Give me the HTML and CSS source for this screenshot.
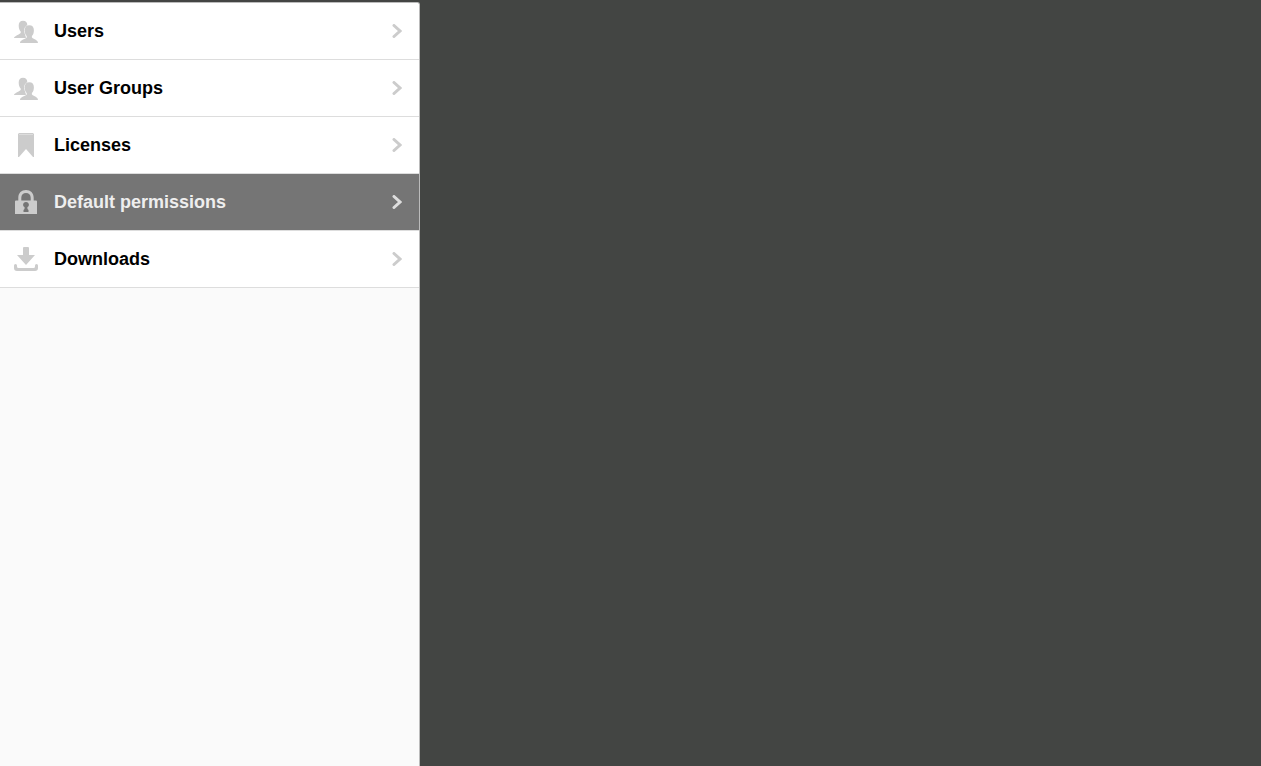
FILE: index.html
```html
<!DOCTYPE html>
<html lang="en">
<head>
    <meta charset="UTF-8">
    <meta name="viewport" content="width=device-width, initial-scale=1.0">
    <title>Administration</title>
    <link rel="stylesheet" href="styles.css">
</head>
<body>

<!-- Shared icons -->
<svg class="sprite" aria-hidden="true">
    <symbol id="icon-users" viewBox="0 0 24 24">
        <path d="M9 1.700c2.900 0 4.300 1.700 4.300 4.500 0 3-.7 5-2 6.300v3L12 19H0c0-1.600 3-2.300 6.700-5v-1.500C5.400 11.200 4.700 9.200 4.700 6.500c0-3 1.500-4.800 4.300-4.800z"/>
        <path class="front" d="M15.300 6.300c3 0 4.600 1.900 4.600 5 0 2.700-.7 4.500-2 5.800v1.500C20 20.500 24 21 24 24H6c0-3 4.700-3.500 6.700-5.400v-1.500c-1.300-1.300-2-3.100-2-5.800 0-3.100 1.600-5 4.600-5z"/>
    </symbol>
    <symbol id="icon-bookmark" viewBox="0 0 24 24">
        <path d="M5 0h14l1 1v23h-1l-7-8-7 8H4V1z"/>
        <path class="shine" d="M5 1h14v1H5z"/>
    </symbol>
    <symbol id="icon-lock" viewBox="0 0 24 24">
        <path fill-rule="evenodd" d="M4.300 10.500V7.700C4.300 3 7.500 0 12 0s7.700 3 7.700 7.700v2.800H22q1 0 1 1V24H1V11.500q0-1 1-1zM7.300 10.500h9.400V7.700C16.700 4.800 14.800 3 12 3S7.300 4.800 7.300 7.700zM12 12c-1.700 0-2.900 1.200-2.900 2.700 0 1.100.6 1.900 1.500 2.400L10.500 19l-1 1v2h5v-2l-1-1-.1-1.900c.9-.5 1.500-1.300 1.500-2.400 0-1.500-1.200-2.700-2.900-2.700z"/>
    </symbol>
    <symbol id="icon-download" viewBox="0 0 24 24">
        <path d="M10 0h4q1 0 1 1v7h6l-9 10-9-10h6V1q0-1 1-1z"/>
        <path d="M1.500 17Q3 17 3 18.500V19.500q0 1.500 1.500 1.500h15q1.500 0 1.500-1.500V18.500Q21 17 22.500 17T24 18.500V21q0 3-3 3H3q-3 0-3-3v-2.500Q0 17 1.500 17z"/>
    </symbol>
    <symbol id="icon-chevron" viewBox="0 0 10 14">
        <path d="M2 1.500 8 7 2 12.500"/>
    </symbol>
</svg>

<div class="layout">
    <nav class="panel" aria-label="Administration">
        <ul class="menu">
            <li>
                <a class="menu-item" href="#users">
                    <svg class="icon"><use href="#icon-users"/></svg>
                    <span class="label">Users</span>
                    <svg class="chevron"><use href="#icon-chevron"/></svg>
                </a>
            </li>
            <li>
                <a class="menu-item" href="#groups">
                    <svg class="icon"><use href="#icon-users"/></svg>
                    <span class="label">User Groups</span>
                    <svg class="chevron"><use href="#icon-chevron"/></svg>
                </a>
            </li>
            <li>
                <a class="menu-item" href="#licenses">
                    <svg class="icon"><use href="#icon-bookmark"/></svg>
                    <span class="label">Licenses</span>
                    <svg class="chevron"><use href="#icon-chevron"/></svg>
                </a>
            </li>
            <li>
                <a class="menu-item active" href="#permissions" aria-current="page">
                    <svg class="icon"><use href="#icon-lock"/></svg>
                    <span class="label">Default permissions</span>
                    <svg class="chevron"><use href="#icon-chevron"/></svg>
                </a>
            </li>
            <li>
                <a class="menu-item" href="#downloads">
                    <svg class="icon"><use href="#icon-download"/></svg>
                    <span class="label">Downloads</span>
                    <svg class="chevron"><use href="#icon-chevron"/></svg>
                </a>
            </li>
        </ul>
    </nav>
    <main></main>
</div>

</body>
</html>
```
FILE: styles.css
```css
* {
    box-sizing: border-box;
}
body {
    margin: 0;
    font-family: Arial, "Liberation Sans", sans-serif;
    background-color: #434543;
}
.sprite {
    display: none;
}
.layout {
    display: grid;
    grid-template-columns: 1fr 2fr;
    min-height: 100vh;
    padding-top: 2px;
}
.panel {
    background-color: #fafafa;
    border-top: 1px solid #bbb;
    border-right: 1px solid #bbb;
    border-top-right-radius: 3px;
    overflow: hidden;
}
.menu {
    list-style: none;
    margin: 0;
    padding: 0;
}
.menu-item {
    display: flex;
    align-items: center;
    gap: 16px;
    height: 57px;
    padding: 0 17px 0 14px;
    border-bottom: 1px solid #ddd;
    background-color: #fff;
    color: #000;
    font-size: 18px;
    font-weight: bold;
    line-height: 24px;
    text-decoration: none;
}
.menu-item.active {
    background-color: #757575;
    color: #eee;
}
.label {
    flex: 1;
}
.icon {
    width: 24px;
    height: 24px;
    fill: #ccc;
}
.front {
    stroke: #fff;
    stroke-width: 1px;
    paint-order: stroke;
}
.shine {
    fill: #ddd;
}
.chevron {
    width: 10px;
    height: 14px;
    fill: none;
    stroke: #ccc;
    stroke-width: 3px;
    stroke-linecap: round;
}
.active .chevron {
    stroke: #ddd;
}
```
